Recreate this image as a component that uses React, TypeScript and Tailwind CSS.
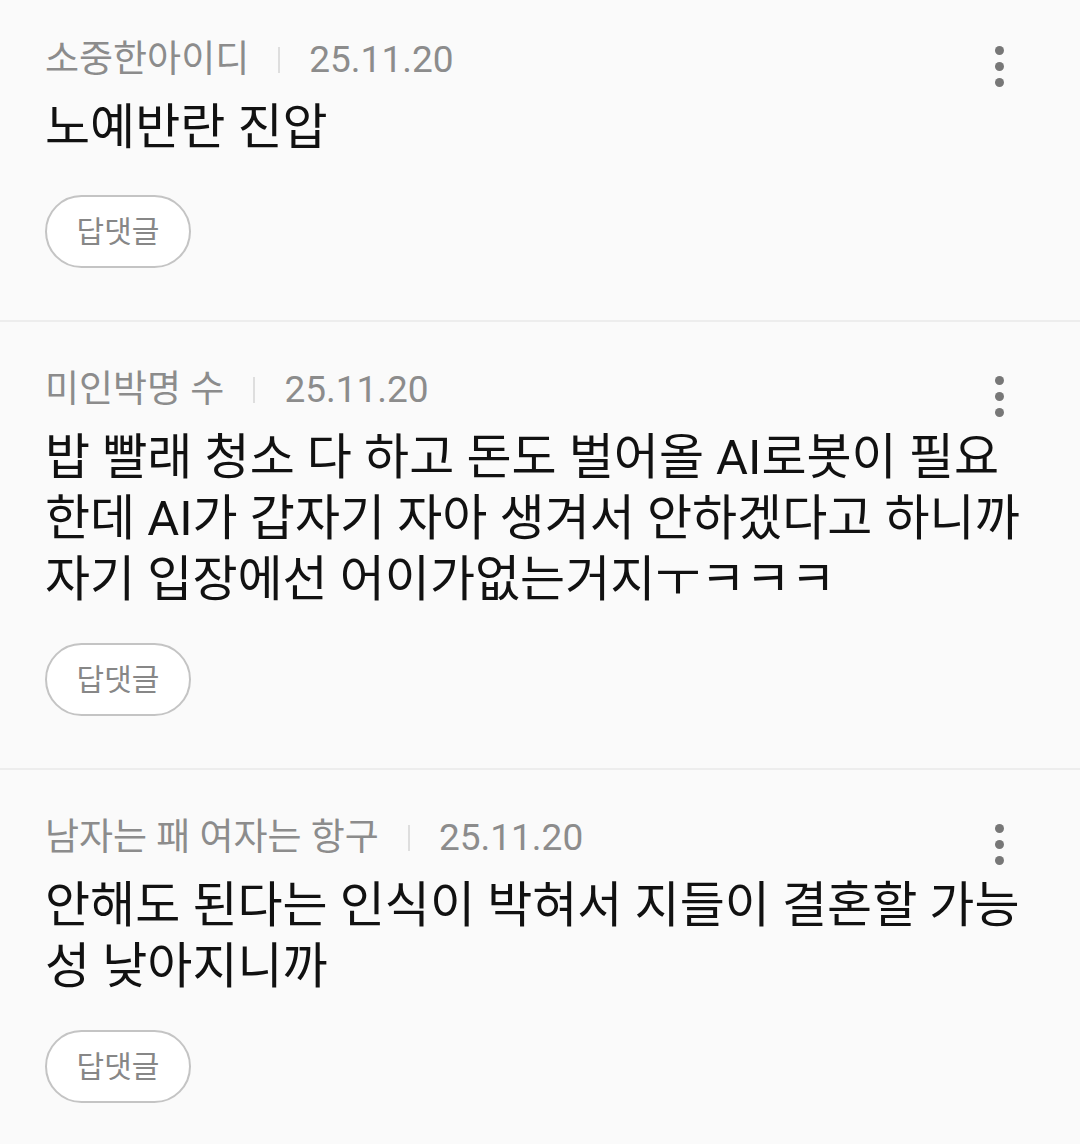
const comments = [
  {
    name: "소중한아이디",
    date: "25.11.20",
    lines: ["노예반란 진압"],
  },
  {
    name: "미인박명 수",
    date: "25.11.20",
    lines: [
      "밥 빨래 청소 다 하고 돈도 벌어올 AI로봇이 필요",
      "한데 AI가 갑자기 자아 생겨서 안하겠다고 하니까",
      "자기 입장에선 어이가없는거지ㅜㅋㅋㅋ",
    ],
  },
  {
    name: "남자는 패 여자는 항구",
    date: "25.11.20",
    lines: ["안해도 된다는 인식이 박혀서 지들이 결혼할 가능", "성 낮아지니까"],
  },
];

function MoreIcon() {
  return (
    <div className="flex flex-col items-center gap-[7px]">
      <span className="block h-[9px] w-[9px] rounded-full bg-[#777]" />
      <span className="block h-[9px] w-[9px] rounded-full bg-[#777]" />
      <span className="block h-[9px] w-[9px] rounded-full bg-[#777]" />
    </div>
  );
}

function CommentItem({ c, first }: { c: (typeof comments)[number]; first: boolean }) {
  return (
    <div
      className={
        "flex border-b-2 border-[#ededed] pl-[45px] pr-[76px] pb-[52px] " +
        (first ? "pt-[32px]" : "pt-[40px]")
      }
    >
      <div className="min-w-0 flex-1">
        <div className="flex h-[56px] items-center">
          <span className="text-[37px] text-[#8c8c8c]">{c.name}</span>
          <span className="mx-[29px] h-[26px] w-[2px] bg-[#dedede]" />
          <span className="text-[37px] text-[#8c8c8c]">{c.date}</span>
        </div>
        <div
          className={
            "mt-[9px] text-[49px] leading-[61px] text-[#111] " +
            (first ? "mb-[37px]" : "mb-[33px]")
          }
        >
          {c.lines.map((l, i) => (
            <div key={i} className="whitespace-nowrap">
              {l}
            </div>
          ))}
        </div>
        <button className="flex h-[73px] w-[146px] items-center justify-center rounded-full border-2 border-[#c4c4c4] bg-white text-[30px] text-[#878787]">
          답댓글
        </button>
      </div>
      <div className="shrink-0 pt-[14px]">
        <MoreIcon />
      </div>
    </div>
  );
}

export default function App() {
  return (
    <div
      className="min-h-[1144px] w-[1080px] bg-[#fafafa]"
      style={{ fontFamily: "Roboto, 'Noto Sans CJK KR', sans-serif" }}
    >
      {comments.map((c, i) => (
        <CommentItem key={i} c={c} first={i === 0} />
      ))}
    </div>
  );
}
